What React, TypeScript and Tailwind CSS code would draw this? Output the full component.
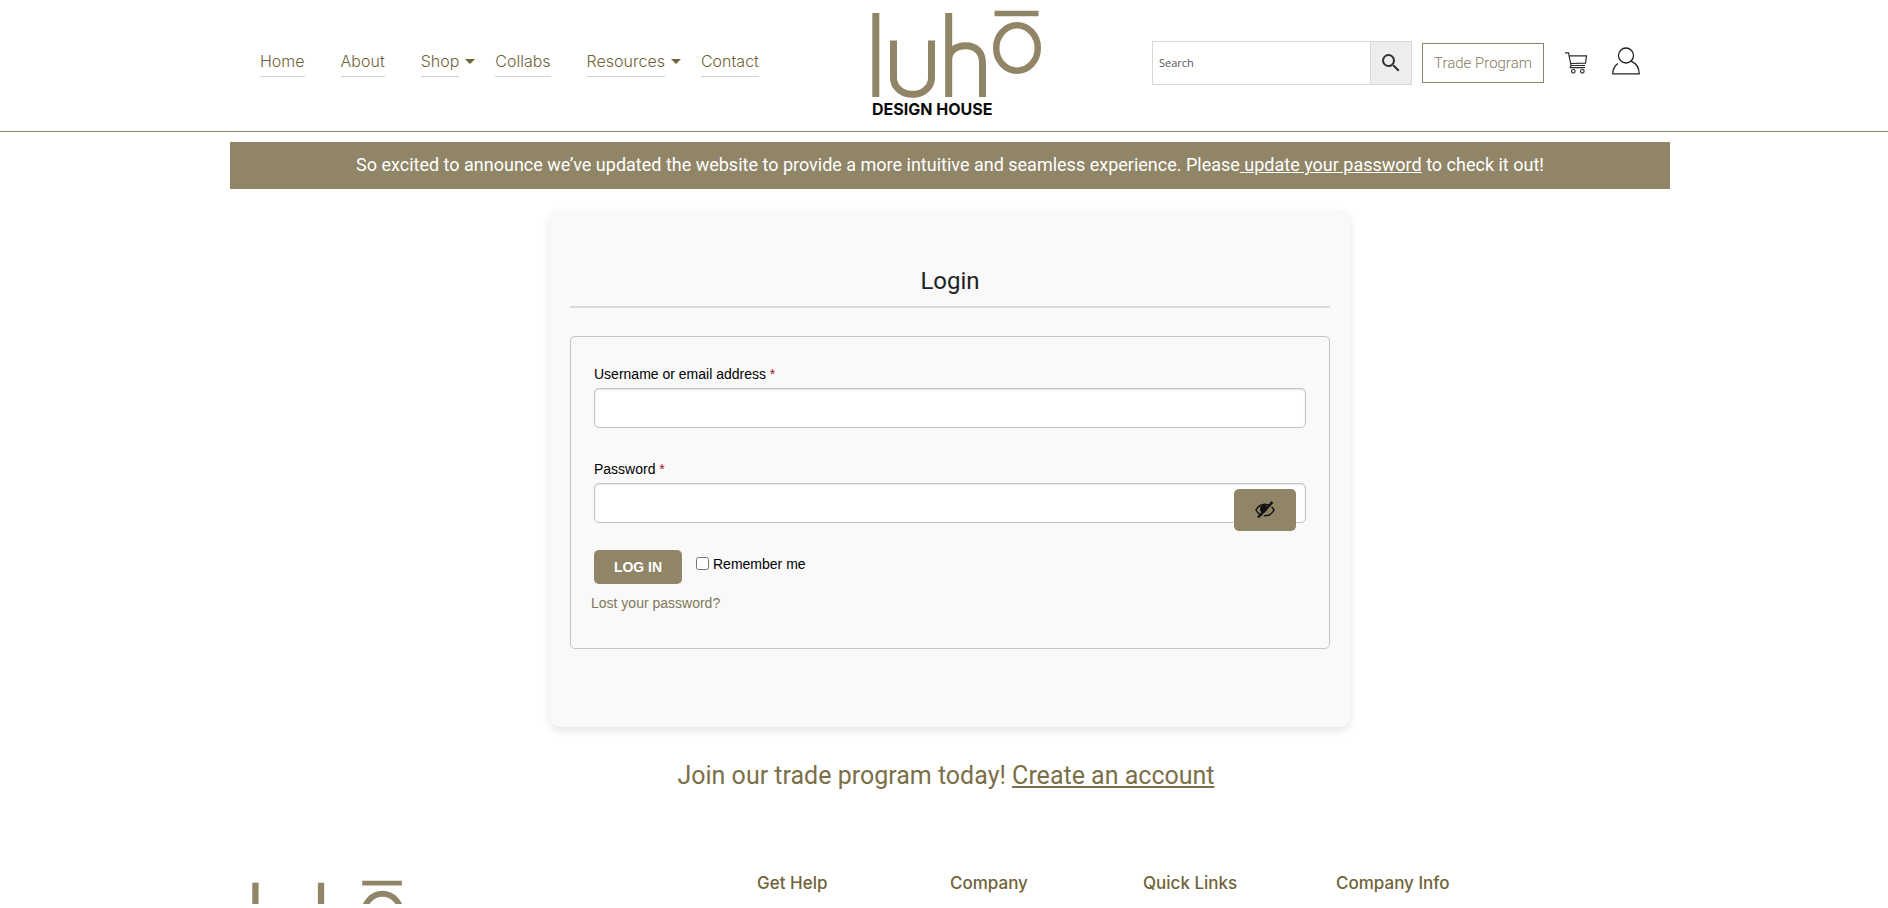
import React, { useState } from 'react';
import { MdSearch } from 'react-icons/md';

const navItems = [
  { label: 'Home' },
  { label: 'About' },
  { label: 'Shop', menu: true },
  { label: 'Collabs' },
  { label: 'Resources', menu: true },
  { label: 'Contact' },
];

const footerColumns = ['Get Help', 'Company', 'Quick Links', 'Company Info'];

const Logo: React.FC<{ className?: string; tagline?: boolean }> = ({ className, tagline }) => (
  <svg viewBox="0 0 170 108" className={className} role="img" aria-label="luhō Design House">
    <g fill="none" stroke="#908566" strokeWidth="7">
      <path d="M3.8 3v84" />
      <path d="M21.5 30.5v37.5a18.8 16.2 0 0 0 38 0V30.5" />
      <path d="M76.7 3v84M76.7 50c0-9 7-14.3 17-14.3s16.8 6.3 16.8 17.3v34" />
      <ellipse cx="145" cy="38" rx="20.8" ry="22.7" strokeWidth="6.5" />
      <path d="M122.5 3.5h44" strokeWidth="5.5" />
    </g>
    {tagline && (
      <text x="0" y="105" fontSize="16" fontWeight="700" fontFamily="Inter, sans-serif" fill="#0b0b0b">
        DESIGN HOUSE
      </text>
    )}
  </svg>
);

const CartIcon: React.FC = () => (
  <svg width="24" height="24" viewBox="0 0 24 24" fill="none" stroke="#2b2b2b" strokeWidth="1.2" aria-hidden="true">
    <path d="M1 1.8h3.5L7 14.5h14" />
    <path d="M5.2 4.8h17.3l-1 7.4-14.8.3" />
    <path d="M7 14.5l-.7 2.2H21" />
    <circle cx="9.3" cy="20.3" r="1.8" />
    <circle cx="18.3" cy="20.3" r="1.8" />
  </svg>
);

const UserIcon: React.FC = () => (
  <svg width="28" height="28" viewBox="0 0 28 28" fill="none" stroke="#222" strokeWidth="1.3" aria-hidden="true">
    <circle cx="14" cy="8.5" r="7.5" />
    <path d="M5.8 16.5C2.5 19 .8 22.5.8 26.8h26.4c0-6-3.2-10.5-8.2-12.6" />
  </svg>
);

const EyeSlashIcon: React.FC = () => (
  <svg width="20" height="18" viewBox="0 0 20 18" fill="none" stroke="#111" aria-hidden="true">
    <path d="M1 9c2-3.8 5.2-5.7 9-5.7S17 5.2 19 9c-2 3.8-5.2 5.7-9 5.7S3 12.8 1 9z" strokeWidth="1.5" />
    <circle cx="9" cy="8" r="4" fill="#111" stroke="none" />
    <path d="M5 17.8L18.8 2.5" stroke="#908566" strokeWidth="1.5" />
    <path d="M3 16.5L17.5 1" strokeWidth="2.5" />
  </svg>
);

const Header: React.FC = () => (
  <header className="border-b border-[#8d8266] pl-3">
    <div className="mx-auto flex h-[131px] max-w-[1440px] items-center justify-between px-[30px] pb-[5px]">
      <nav className="flex font-['Inter',sans-serif] text-base font-light text-[#6f6338]">
        {navItems.map((item) => (
          <div key={item.label} className={`flex items-center ${item.menu ? 'mr-5' : 'mr-9 last:mr-0'}`}>
            <a href="#" className="border-b border-[#d3d3cd] pb-[3px]">
              {item.label}
            </a>
            {item.menu && (
              <span className="mb-1 ml-1.5 border-x-[5px] border-t-[5px] border-x-transparent border-t-[#6f6338]" />
            )}
          </div>
        ))}
      </nav>

      <a href="#" className="pt-0.5 pl-1">
        <Logo tagline className="w-[170px]" />
      </a>

      <div className="flex items-center">
        <form className="flex h-11 w-[260px] border border-[#d8d8d8]" onSubmit={(e) => e.preventDefault()}>
          <input
            type="search"
            aria-label="Search"
            placeholder="Search"
            className="min-w-0 flex-1 px-1.5 font-['Open_Sans',sans-serif] text-[11px] outline-none placeholder:text-[#555]"
          />
          <button
            type="submit"
            aria-label="Submit search"
            className="flex w-[41px] items-center justify-center border-l border-[#d8d8d8] bg-[#ededed] text-[#333]"
          >
            <MdSearch size={24} />
          </button>
        </form>
        <a
          href="#"
          className="ml-2.5 border border-[#8d8266] px-[11px] py-[7px] font-['Roboto',sans-serif] text-[15px] leading-6 font-light text-[#857b5e]"
        >
          Trade Program
        </a>
        <a href="#" aria-label="Cart" className="ml-5">
          <CartIcon />
        </a>
        <a href="#" aria-label="Account" className="ml-6 pb-1">
          <UserIcon />
        </a>
      </div>
    </div>
  </header>
);

const inputClass =
  'h-10 w-full rounded-[5px] border border-[#c3c3c7] bg-white px-3 shadow-[inset_0_1px_2px_rgba(0,0,0,0.12)] outline-none';

const LoginForm: React.FC = () => {
  const [visible, setVisible] = useState(false);

  return (
    <form
      className="mt-7 rounded-[5px] border border-[#c3c3cb] px-[23px] pt-5 pb-[34px]"
      onSubmit={(e) => e.preventDefault()}
    >
      <label htmlFor="username" className="block pt-1 leading-[27px]">
        Username or email address <span className="text-[#a00f1b]">*</span>
      </label>
      <input id="username" type="text" className={inputClass} />

      <label htmlFor="password" className="mt-6 block pt-1 leading-[27px]">
        Password <span className="text-[#a00f1b]">*</span>
      </label>
      <div className="relative">
        <input id="password" type={visible ? 'text' : 'password'} className={inputClass} />
        <button
          type="button"
          aria-label="Show password"
          onClick={() => setVisible(!visible)}
          className="absolute top-1.5 right-2.5 flex h-[42px] w-[62px] items-center justify-center rounded-[5px] bg-[#908566]"
        >
          <EyeSlashIcon />
        </button>
      </div>

      <div className="mt-[27px] flex">
        <button type="submit" className="h-[34px] w-[88px] rounded-[5px] bg-[#908566] font-bold text-white">
          LOG IN
        </button>
        <label className="ml-3.5 flex h-7 items-center gap-1">
          <input type="checkbox" className="mb-0.5 size-[13px]" />
          Remember me
        </label>
      </div>
      <a href="#" className="mt-2 -ml-[3px] block leading-[22px] text-[#81765a]">
        Lost your password?
      </a>
    </form>
  );
};

const App: React.FC = () => {
  return (
    <div className="bg-white">
      <Header />

      <main className="pl-3 font-['Roboto',sans-serif]">
        <p className="mx-auto mt-2.5 max-w-[1440px] bg-[#908566] pt-[9px] pb-[11px] text-center text-lg leading-[27px] text-white">
          So excited to announce we’ve updated the website to provide a more intuitive and seamless experience. Please
          <a href="#" className="underline">
            {' '}update your password
          </a>{' '}
          to check it out!
        </p>

        <section className="mx-auto mt-[21px] max-w-[800px] rounded-[10px] bg-[#f9f9f9] px-5 pt-[53px] pb-[78px] font-['Liberation_Sans',sans-serif] text-sm text-black shadow-[0_4px_8px_rgba(0,0,0,0.1)]">
          <h1 className="border-b-2 border-[#d9d9d9] pb-[7px] text-center font-['Roboto',sans-serif] text-2xl leading-9 text-[#222]">
            Login
          </h1>
          <LoginForm />
        </section>

        <p className="mt-[33px] pr-2 text-center text-[25px] leading-8 text-[#7a6f48]">
          Join our trade program today!{' '}
          <a href="#" className="underline">
            Create an account
          </a>
        </p>
      </main>

      <footer className="mt-[79px] pl-3">
        <div className="mx-auto flex max-w-[1440px] pl-[22px]">
          <div className="mt-[9px] h-6 w-[505px] overflow-hidden">
            <Logo className="w-[153px]" />
          </div>
          {footerColumns.map((title) => (
            <h2
              key={title}
              className="w-[193px] font-['Inter',sans-serif] text-[17px] leading-6 font-medium text-[#6f6338]"
            >
              {title}
            </h2>
          ))}
        </div>
      </footer>
    </div>
  );
};

export default App;
